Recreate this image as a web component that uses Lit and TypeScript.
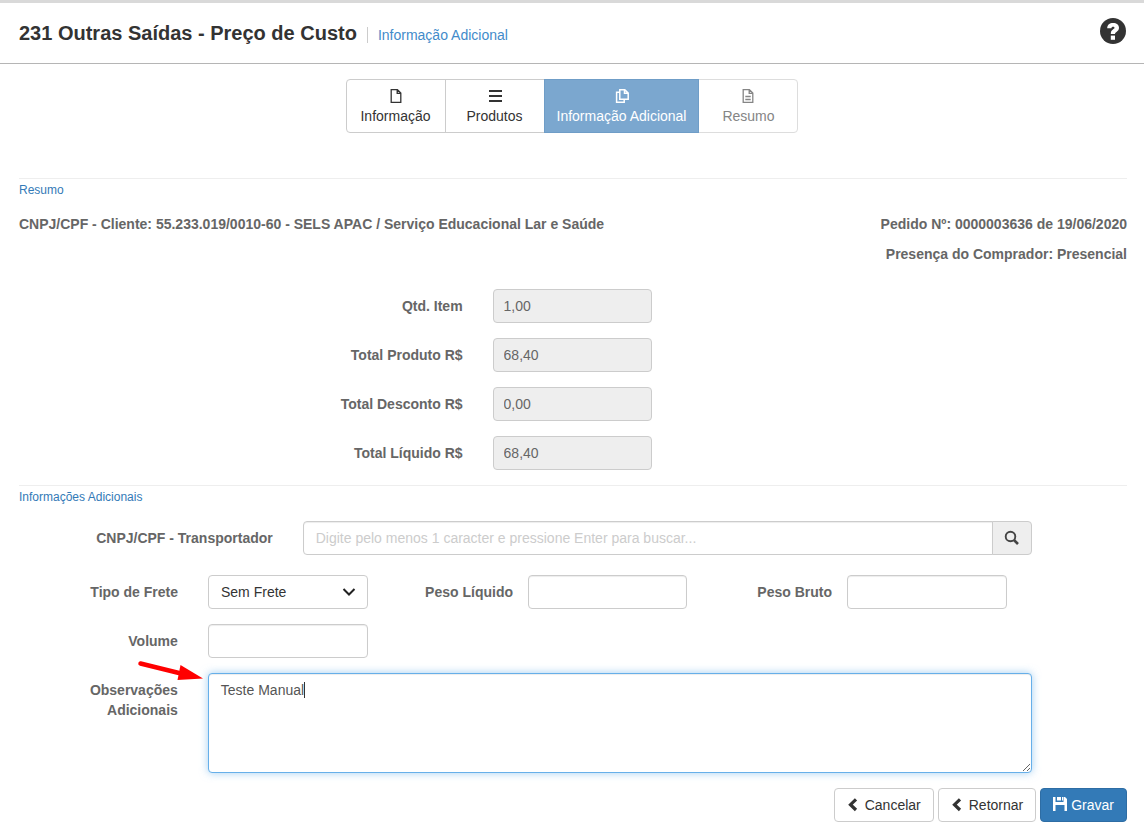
import { LitElement, html, css } from "lit";
import { customElement, state } from "lit/decorators.js";

const icons = {
  file: html`<svg class="icon" width="14" height="16" viewBox="0 0 14 16" aria-hidden="true" fill="none" stroke="currentColor" stroke-width="1.3">
    <path d="M2.2 1.7h6.2l3.4 3.4v9.2H2.2z M8.2 1.7v3.7h3.6"></path></svg>`,
  bars: html`<svg class="icon" width="14" height="16" viewBox="0 0 14 16" aria-hidden="true" fill="currentColor">
    <path d="M1 2h13v2H1z M1 7h13v2H1z M1 12h13v2H1z"></path></svg>`,
  copy: html`<svg class="icon" width="14" height="16" viewBox="0 0 14 16" aria-hidden="true" fill="none" stroke="currentColor" stroke-width="1.5">
    <path d="M4.800 1.800h5l3.400 3.300v6.200H4.800z M9.500 1.800v3.500h3.700 M4.800 4.200H1.600v10h7.600v-2.900"></path></svg>`,
  fileText: html`<svg class="icon" width="14" height="16" viewBox="0 0 14 16" aria-hidden="true" fill="none" stroke="currentColor" stroke-width="1.3">
    <path d="M2.2 1.7h6.2l3.4 3.4v9.2H2.2z M8.2 1.7v3.7h3.6 M4.3 8.5h5.4 M4.3 11.5h5.4"></path></svg>`,
  help: html`<svg class="icon" width="26" height="26" viewBox="0 0 26 26" aria-hidden="true">
    <circle cx="13" cy="13" r="13" fill="#333"></circle>
    <path d="M7.2 10.2C7.3 6.8 9.6 5 13.1 5c3.5 0 5.9 1.8 5.9 4.8 0 2-1 3.100-2.500 4.100-1.100.7-1.500 1-1.500 2.100h-4.200c0-2.500.7-3.500 2.400-4.700.9-.6 1.300-.9 1.300-1.500 0-.7-.5-1.100-1.400-1.100-1 0-1.600.5-1.700 1.500z" fill="#fff"></path>
    <path d="M10.800 17.600H15v4.200h-4.200z" fill="#fff"></path></svg>`,
  search: html`<svg class="icon" width="16" height="16" viewBox="0 0 16 16" aria-hidden="true" fill="none" stroke="#444">
    <circle cx="6.500" cy="6.500" r="4.800" stroke-width="1.900"></circle>
    <path d="M10 10l4 4" stroke-width="2.600"></path></svg>`,
  chevron: html`<svg class="icon" width="14" height="14" viewBox="0 0 14 14" aria-hidden="true">
    <path d="M9 1.300L3.500 6.700 9 12" fill="none" stroke="currentColor" stroke-width="3.200"></path></svg>`,
  save: html`<svg class="icon" width="14" height="16" viewBox="0 0 14 16" aria-hidden="true" fill="currentColor">
    <path d="M0 0h2.500v5h8V0H12l2 2v12h-2.500V8h-9v6H0z M4 0h4v3.500H4z M9 0h1v3.500H9z" fill-rule="evenodd"></path></svg>`,
};

const steps = [
  { label: "Informação", icon: icons.file, kind: "" },
  { label: "Produtos", icon: icons.bars, kind: "" },
  { label: "Informação Adicional", icon: icons.copy, kind: "current" },
  { label: "Resumo", icon: icons.fileText, kind: "muted" },
];

const totals = [
  { id: "qtd", label: "Qtd. Item", value: "1,00" },
  { id: "produto", label: "Total Produto R$", value: "68,40" },
  { id: "desconto", label: "Total Desconto R$", value: "0,00" },
  { id: "liquido", label: "Total Líquido R$", value: "68,40" },
];

@customElement("app-root")
class AppRoot extends LitElement {
  @state() private notes = "Teste Manual";

  static styles = css`
    :host {
      display: block;
      background: #fff;
      color: #333;
      font: 14px/20px "Liberation Sans", Arial, sans-serif;
    }
    *, *::before, *::after { box-sizing: border-box; }
    .icon { display: inline-block; flex: none; }
    .header {
      display: flex;
      align-items: center;
      min-height: 64px;
      padding: 0 18px 0 19px;
      border-top: 3px solid #d9d9d9;
      border-bottom: 1px solid #b5b5b5;
    }
    .title { margin: 0; font-size: 20px; line-height: 24px; font-weight: 700; }
    .subtitle {
      margin: 4px auto 0 10px;
      padding-left: 10px;
      border-left: 1px solid #ccc;
      color: #428bca;
      line-height: 16px;
    }
    .help { display: flex; padding: 0 0 4px; border: 0; background: none; cursor: pointer; }
    .steps { display: flex; justify-content: center; margin: 15px 0 45px; }
    .step {
      display: flex;
      flex-direction: column;
      align-items: center;
      min-width: 100px;
      margin-left: -1px;
      padding: 6px 12px;
      border: 1px solid #ccc;
      background: #fff;
      color: #333;
      font: inherit;
    }
    .step:first-child { margin-left: 0; border-radius: 4px 0 0 4px; }
    .step:last-child { border-radius: 0 4px 4px 0; }
    .step .icon { margin: 2px 0; }
    .step.current { z-index: 1; background: #7ba7cf; border-color: #6f9dc7; color: #fff; }
    .step.muted { border-color: #ddd; color: #858585; }
    .body { padding: 0 17px 16px 19px; }
    .section { margin: 0; border-top: 1px solid #eee; }
    .section-title { margin: 0; color: #337ab7; font-size: 12px; font-weight: 400; line-height: 20px; padding-top: 1px; }
    .order {
      display: flex;
      justify-content: space-between;
      gap: 20px;
      margin: 9px 0 20px;
      color: #666;
      font-weight: 700;
      line-height: 30px;
    }
    .order p { margin: 0; }
    .order .right { text-align: right; }
    .row {
      display: grid;
      grid-template-columns: repeat(12, minmax(0, 1fr));
      margin: 0 -15px 15px -16px;
    }
    .row.freight {
      grid-template-columns:
        minmax(0, 190fr) minmax(0, 190fr) minmax(0, 130fr) minmax(0, 189fr)
        minmax(0, 130fr) minmax(0, 190fr) minmax(0, 120fr);
    }
    .row.carrier { margin-top: 14px; margin-bottom: 20px; }
    .label { padding: 7px 15px 0 0; text-align: right; font-weight: 700; color: #666; }
    .label.tight { padding-right: 0; }
    .cell { position: relative; display: flex; padding: 0 15px; }
    .total-label { grid-column: 4 / span 2; }
    .total-cell { grid-column: 6 / span 2; }
    .carrier-label { grid-column: 1 / span 3; }
    .carrier-cell { grid-column: 4 / span 8; }
    .first-label { grid-column: 1 / span 2; }
    .first-cell { grid-column: 3 / span 2; }
    .notes-cell { grid-column: 3 / span 9; }
    .control {
      width: 100%;
      min-width: 0;
      height: 34px;
      margin: 0;
      padding: 6px 12px;
      border: 1px solid #ccc;
      border-radius: 4px;
      background: #fff;
      box-shadow: inset 0 1px 1px rgba(0, 0, 0, 0.075);
      color: #555;
      font: inherit;
      outline: 0;
    }
    .control::placeholder { color: #ccc; opacity: 1; }
    .control.readonly { background: #eee; padding-left: 10px; color: #666; box-shadow: none; }
    .control.search { border-radius: 4px 0 0 4px; }
    .search-button {
      display: flex;
      align-items: center;
      justify-content: center;
      flex: none;
      width: 40px;
      margin-left: -1px;
      padding: 0;
      border: 1px solid #ccc;
      border-radius: 0 4px 4px 0;
      background: #eee;
    }
    .control.select { appearance: none; color: #333; box-shadow: none; }
    .select-arrow { position: absolute; right: 27px; top: 12px; pointer-events: none; }
    .control.notes {
      display: block;
      height: 100px;
      resize: vertical;
      border-color: #66afe9;
      box-shadow: inset 0 1px 1px rgba(0, 0, 0, 0.075), 0 0 8px rgba(102, 175, 233, 0.6);
    }
    .caret {
      position: absolute;
      left: 28px;
      top: 9px;
      height: 16px;
      border-right: 1px solid #333;
      color: transparent;
      pointer-events: none;
      line-height: 16px;
      user-select: none;
    }
    .pointer { position: absolute; left: -56px; top: -14px; pointer-events: none; }
    .actions { display: flex; justify-content: flex-end; gap: 4px; }
    .button {
      display: flex;
      align-items: center;
      gap: 4px;
      height: 34px;
      padding: 6px 12px;
      border: 1px solid #ccc;
      border-radius: 4px;
      background: #fff;
      color: #333;
      font: inherit;
    }
    .button.primary { border-color: #2e6da4; background: #337ab7; color: #fff; }
  `;

  render() {
    return html`
      <header class="header">
        <h1 class="title">231 Outras Saídas - Preço de Custo</h1>
        <span class="subtitle">Informação Adicional</span>
        <button class="help" type="button" aria-label="Ajuda">${icons.help}</button>
      </header>
      <nav class="steps">
        ${steps.map((s) => html`<button type="button" class="step ${s.kind}">${s.icon}<span>${s.label}</span></button>`)}
      </nav>
      <main class="body">
        <section class="section">
          <h2 class="section-title">Resumo</h2>
          <div class="order">
            <p>CNPJ/CPF - Cliente: 55.233.019/0010-60 - SELS APAC / Serviço Educacional Lar e Saúde</p>
            <div class="right">
              <p>Pedido Nº: 0000003636 de 19/06/2020</p>
              <p>Presença do Comprador: Presencial</p>
            </div>
          </div>
          ${totals.map((t) => html`
            <div class="row">
              <label class="label total-label" for=${t.id}>${t.label}</label>
              <div class="cell total-cell"><input class="control readonly" id=${t.id} readonly .value=${t.value}></div>
            </div>`)}
        </section>
        <section class="section">
          <h2 class="section-title">Informações Adicionais</h2>
          <div class="row carrier">
            <label class="label carrier-label" for="carrier">CNPJ/CPF - Transportador</label>
            <div class="cell carrier-cell">
              <input class="control search" id="carrier" placeholder="Digite pelo menos 1 caracter e pressione Enter para buscar...">
              <button class="search-button" type="button" aria-label="Buscar">${icons.search}</button>
            </div>
          </div>
          <div class="row freight">
            <label class="label" for="freight">Tipo de Frete</label>
            <div class="cell">
              <select class="control select" id="freight"><option>Sem Frete</option></select>
              <svg class="select-arrow" width="14" height="10" viewBox="0 0 14 10" aria-hidden="true">
                <path d="M1.500 2L7 7.500 12.500 2" fill="none" stroke="#222" stroke-width="2"></path>
              </svg>
            </div>
            <label class="label tight" for="net">Peso Líquido</label>
            <div class="cell"><input class="control" id="net"></div>
            <label class="label tight" for="gross">Peso Bruto</label>
            <div class="cell"><input class="control" id="gross"></div>
          </div>
          <div class="row">
            <label class="label first-label" for="volume">Volume</label>
            <div class="cell first-cell"><input class="control" id="volume"></div>
          </div>
          <div class="row">
            <label class="label first-label" for="notes">Observações<br>Adicionais</label>
            <div class="cell notes-cell">
              <textarea class="control notes" id="notes" .value=${this.notes}
                @input=${(e: Event) => (this.notes = (e.target as HTMLTextAreaElement).value)}></textarea>
              <span class="caret" aria-hidden="true">${this.notes}</span>
              <svg class="pointer" width="66" height="24" viewBox="0 0 66 24" aria-hidden="true">
                <path d="M3.500 4.500L42 14" stroke="#f00" stroke-width="4.500" stroke-linecap="round"></path>
                <path d="M43.500 6L66 19.500 40.500 21z" fill="#f00"></path>
              </svg>
            </div>
          </div>
        </section>
        <div class="actions">
          <button class="button" type="button">${icons.chevron}Cancelar</button>
          <button class="button" type="button">${icons.chevron}Retornar</button>
          <button class="button primary" type="button">${icons.save}Gravar</button>
        </div>
      </main>
    `;
  }
}
